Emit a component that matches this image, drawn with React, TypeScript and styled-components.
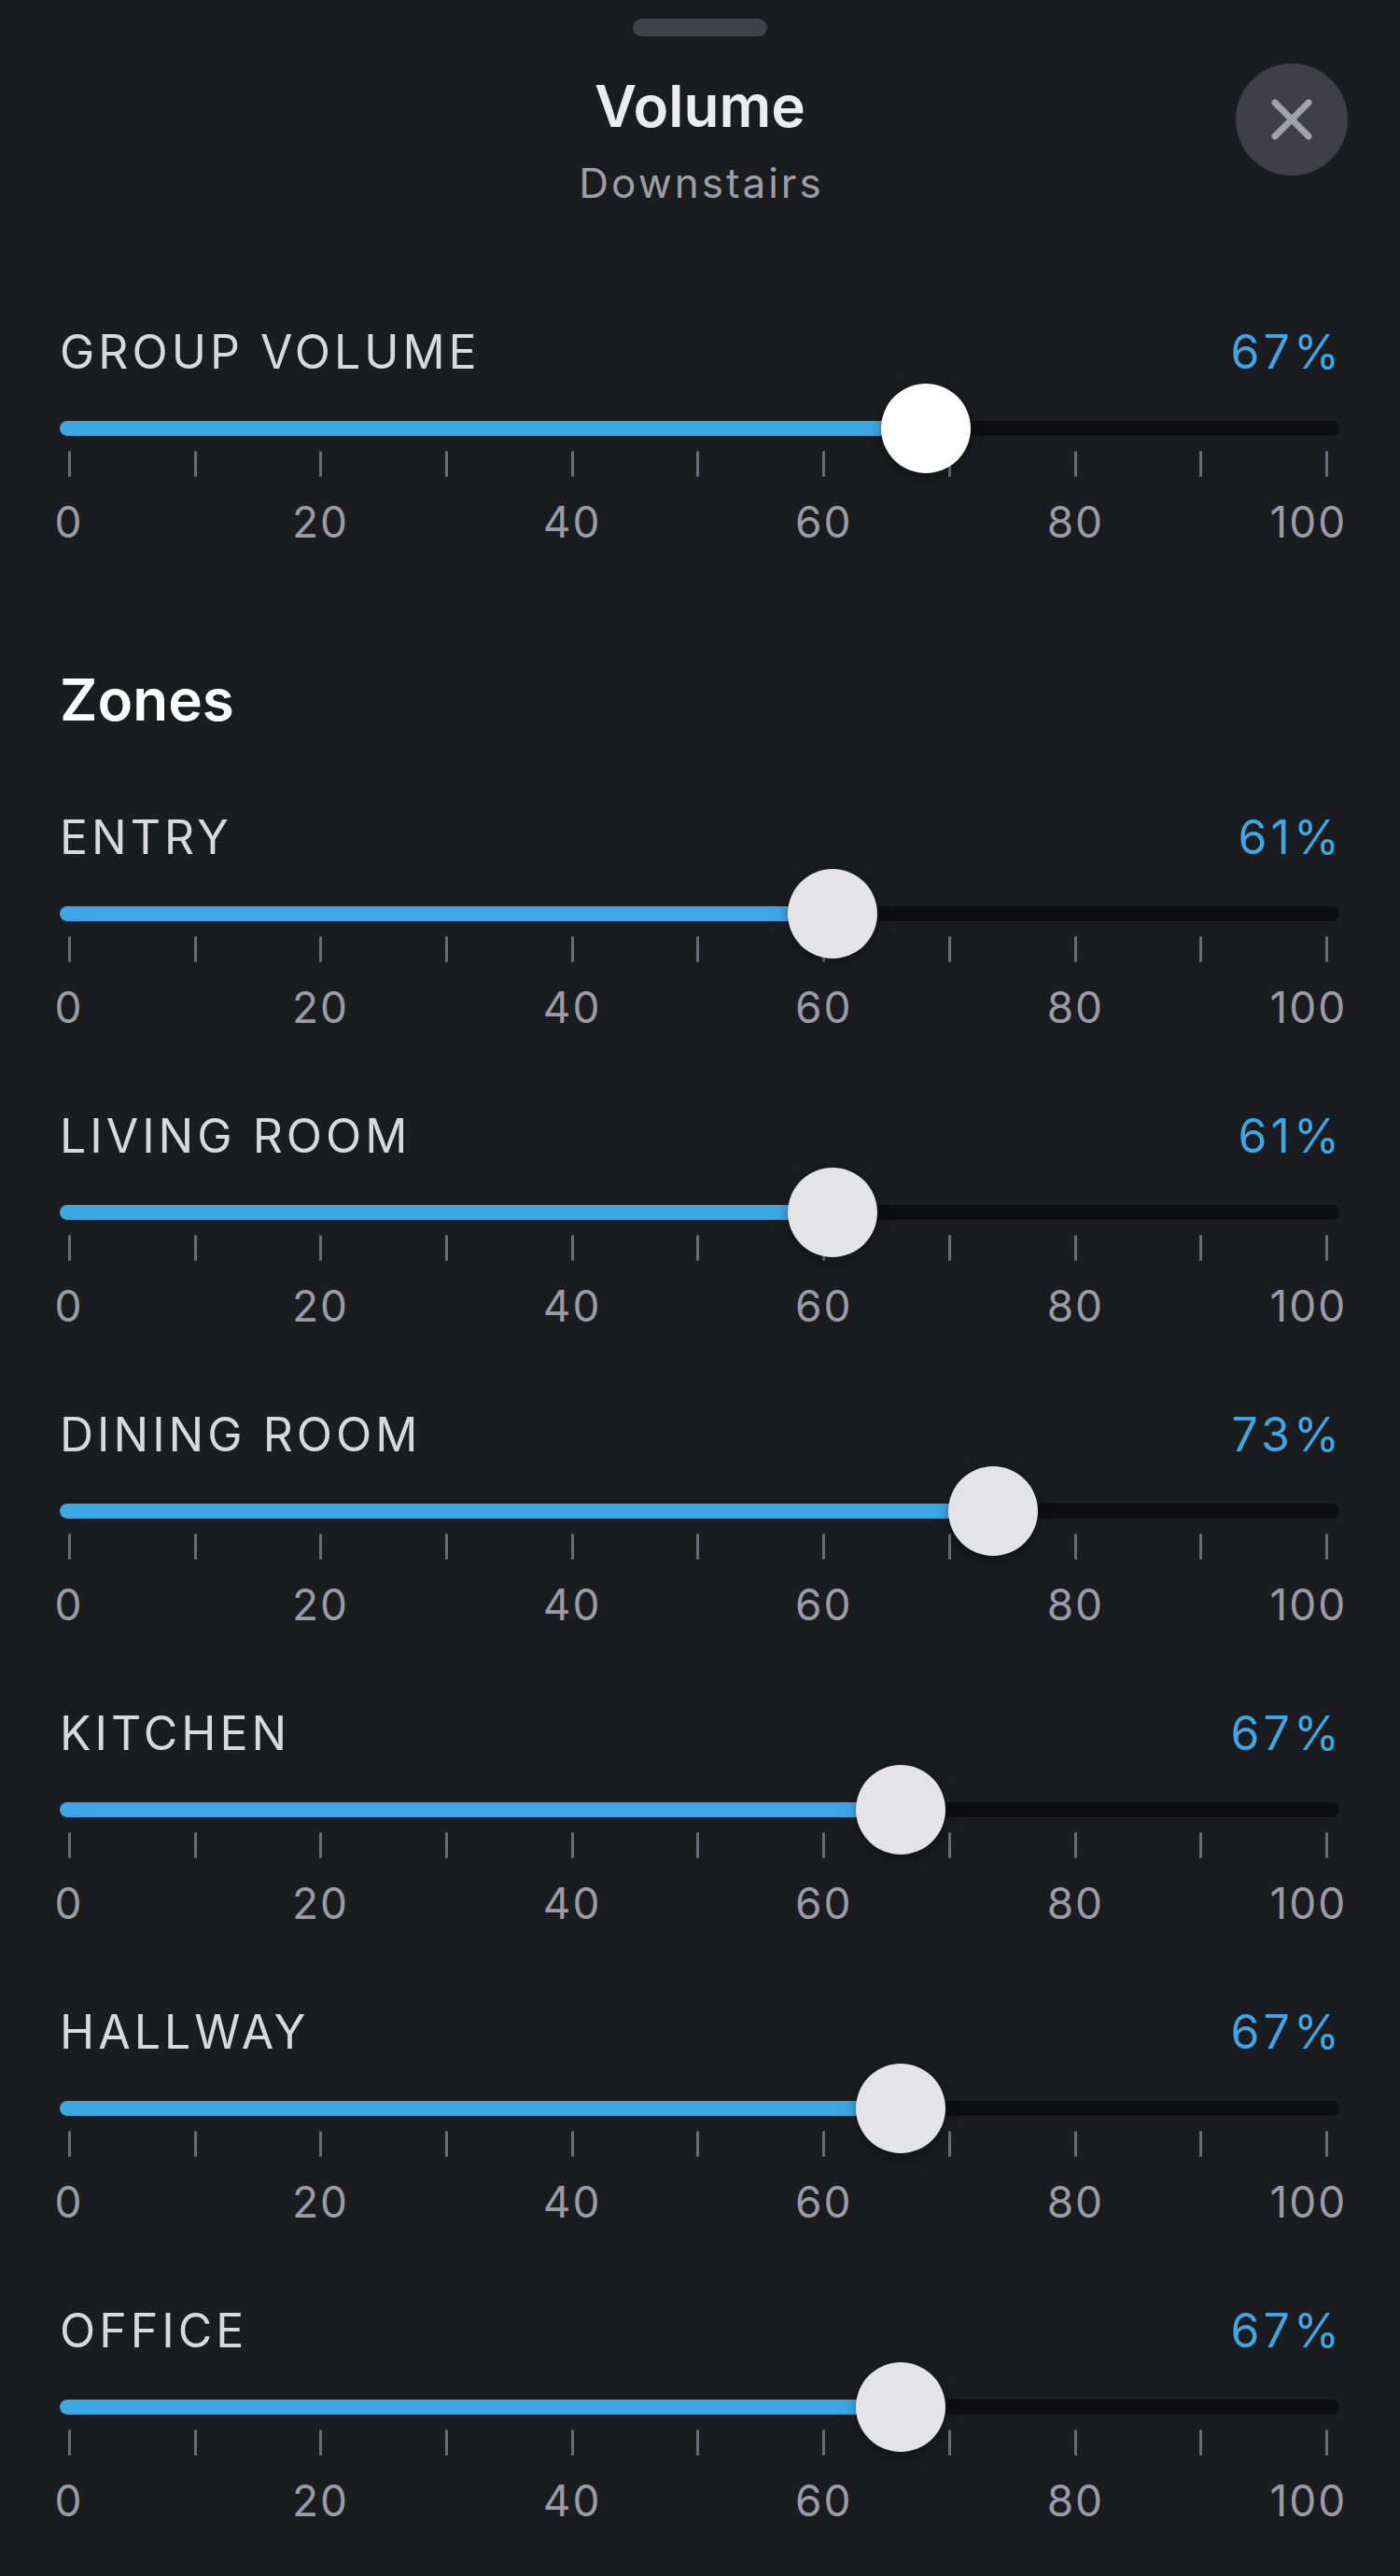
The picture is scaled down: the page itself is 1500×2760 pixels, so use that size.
import React, { FC } from 'react'
import styled, { createGlobalStyle } from 'styled-components'

const GlobalStyle = createGlobalStyle`
  html, body {
    margin: 0;
    padding: 0;
    background: #1b1c1f;
  }
  body {
    font-family: Inter, "Noto Sans", "Liberation Sans", sans-serif;
    color: #d9d9dd;
  }
`

const Sheet = styled.div`
  width: 1500px;
  min-height: 2760px;
  background: #1b1c1f;
  display: flex;
  flex-direction: column;
`

const Handle = styled.div`
  align-self: center;
  width: 144px;
  height: 19px;
  margin-top: 20px;
  border-radius: 10px;
  background: #414148;
`

const Header = styled.div`
  display: grid;
  grid-template-columns: 1fr auto 1fr;
  padding: 0 56px;
  margin-top: 29px;
`

const TitleBlock = styled.div`
  grid-column: 2;
  display: flex;
  flex-direction: column;
  align-items: center;
  padding-top: 11px;
`

const Title = styled.h1`
  margin: 0;
  font-size: 62px;
  line-height: 70px;
  font-weight: 600;
  color: #ececee;
`

const Subtitle = styled.div`
  margin: 21px -3px 0 0;
  font-size: 44px;
  line-height: 52px;
  letter-spacing: 3px;
  color: #9e9ea6;
`

const CloseButton = styled.button`
  grid-column: 3;
  justify-self: end;
  width: 120px;
  height: 120px;
  border: none;
  border-radius: 50%;
  background: #3f3f45;
  display: flex;
  align-items: center;
  justify-content: center;
  padding: 0;
  cursor: pointer;
`

const Content = styled.div`
  display: flex;
  flex-direction: column;
  padding: 0 65px 0 64px;
  margin-top: 123px;
`

const SectionTitle = styled.h2`
  margin: 126px 0 80px;
  font-size: 62px;
  line-height: 70px;
  font-weight: 600;
  color: #ffffff;
`

const ZoneList = styled.div`
  display: flex;
  flex-direction: column;
  gap: 76px;
`

const Block = styled.div`
  display: flex;
  flex-direction: column;
`

const HeadRow = styled.div`
  display: flex;
  justify-content: space-between;
  align-items: center;
  height: 64px;
`

const Label = styled.span`
  font-size: 50px;
  line-height: 64px;
  font-weight: 400;
  letter-spacing: 4px;
  color: #d9d9dd;
`

const Percent = styled.span`
  font-size: 50px;
  line-height: 64px;
  letter-spacing: 4px;
  margin-right: -4px;
  color: #3fa6e6;
`

const TrackRow = styled.div`
  position: relative;
  height: 48px;
  margin-top: 26px;
  display: flex;
  align-items: center;
`

const Rail = styled.div`
  position: relative;
  width: 100%;
  height: 16px;
  border-radius: 8px;
  background: #0e0e10;
`

const Fill = styled.div`
  height: 100%;
  border-radius: 8px;
  background: #3fa6e6;
`

const Thumb = styled.div<{ $bright?: boolean }>`
  position: absolute;
  top: 50%;
  width: 96px;
  height: 96px;
  border-radius: 50%;
  transform: translate(-50%, -50%);
  background: ${p => (p.$bright ? '#ffffff' : '#e4e4e7')};
  box-shadow: 0 4px 14px rgba(0, 0, 0, 0.35);
`

const TickRow = styled.div`
  display: flex;
  justify-content: space-between;
  height: 28px;
  padding: 0 12px 0 9px;
`

const Tick = styled.div`
  width: 3px;
  height: 28px;
  border-radius: 2px;
  background: #6b6b73;
`

const ScaleRow = styled.div`
  display: flex;
  justify-content: space-between;
  margin: 18px -27px 0 -30px;
`

const ScaleLabel = styled.span<{ $shift?: number }>`
  width: 80px;
  display: flex;
  justify-content: center;
  font-size: 46px;
  line-height: 60px;
  letter-spacing: 2px;
  color: #9b9ba3;
  white-space: nowrap;
  transform: translateX(${p => p.$shift ?? 0}px);
`

interface SliderProps {
  label: string
  percent: number
  pos: number
  bright?: boolean
}

const ticks = Array.from({ length: 11 }, (_, i) => i)
const scale = [0, 20, 40, 60, 80, 100]

const VolumeSlider: FC<SliderProps> = ({ label, percent, pos, bright }) => {
  const center = `calc(48px + ${pos} * (100% - 96px))`
  return (
    <Block>
      <HeadRow>
        <Label>{label}</Label>
        <Percent>{percent}%</Percent>
      </HeadRow>
      <TrackRow>
        <Rail>
          <Fill style={{ width: center }} />
        </Rail>
        <Thumb $bright={bright} style={{ left: center }} />
      </TrackRow>
      <TickRow>
        {ticks.map(t => <Tick key={t} />)}
      </TickRow>
      <ScaleRow>
        {scale.map(n =>
          <ScaleLabel key={n} $shift={n === 100 ? -20 : 0}>{n}</ScaleLabel>
        )}
      </ScaleRow>
    </Block>
  )
}

const zones = [
  { label: 'ENTRY', percent: 61, pos: 0.612 },
  { label: 'LIVING ROOM', percent: 61, pos: 0.612 },
  { label: 'DINING ROOM', percent: 73, pos: 0.747 },
  { label: 'KITCHEN', percent: 67, pos: 0.669 },
  { label: 'HALLWAY', percent: 67, pos: 0.669 },
  { label: 'OFFICE', percent: 67, pos: 0.669 },
]

const App: FC = () =>
  <>
    <GlobalStyle />
    <Sheet>
      <Handle />
      <Header>
        <TitleBlock>
          <Title>Volume</Title>
          <Subtitle>Downstairs</Subtitle>
        </TitleBlock>
        <CloseButton aria-label="Close">
          <svg width="48" height="48" viewBox="0 0 48 48">
            <path d="M6 6 L42 42 M42 6 L6 42" stroke="#a1a1aa" strokeWidth="7" strokeLinecap="round" fill="none" />
          </svg>
        </CloseButton>
      </Header>
      <Content>
        <VolumeSlider label="GROUP VOLUME" percent={67} pos={0.69} bright />
        <SectionTitle>Zones</SectionTitle>
        <ZoneList>
          {zones.map(z => <VolumeSlider key={z.label} {...z} />)}
        </ZoneList>
      </Content>
    </Sheet>
  </>

export default App
